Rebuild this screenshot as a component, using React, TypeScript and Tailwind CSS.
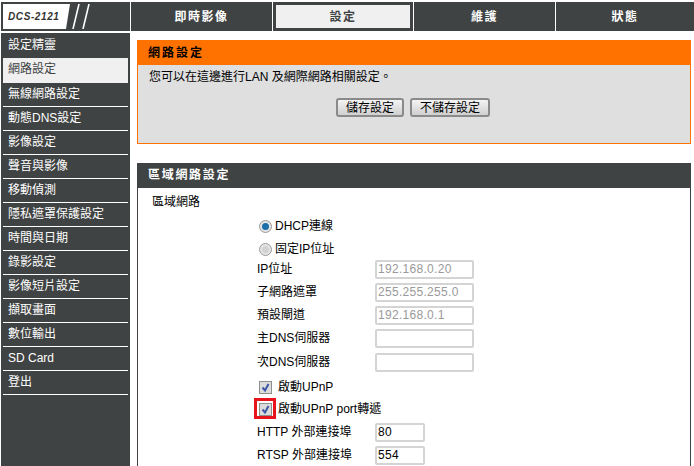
const font = { fontFamily: '"Liberation Sans", "Noto Sans CJK TC", sans-serif' };

const menu = ["設定精靈", "網路設定", "無線網路設定", "動態DNS設定", "影像設定", "聲音與影像", "移動偵測", "隱私遮罩保護設定", "時間與日期", "錄影設定", "影像短片設定", "擷取畫面", "數位輸出", "SD Card", "登出"];

function Check() {
  return (
    <div className="w-[13px] h-[13px] border border-[#8e8f8f] bg-[#dcdcdc] flex items-center justify-center">
      <svg width="11" height="11" viewBox="0 0 11 11">
        <path d="M2.5 5.5 L5 8.5 L8.5 2" fill="none" stroke="#3f58a6" strokeWidth="2" />
      </svg>
    </div>
  );
}

function Radio({ on }: { on?: boolean }) {
  return (
    <div className="w-[13px] h-[13px] rounded-full border border-[#9a9a9a] bg-[#e4e4e4] flex items-center justify-center">
      {on ? <div className="w-[7px] h-[7px] rounded-full bg-[#1c6ea8]" /> : <div className="w-[7px] h-[7px] rounded-full bg-[#d2d2d2]" />}
    </div>
  );
}

function Field({ label, value, wide, mb }: { label: string; value?: string; wide?: boolean; mb: string }) {
  return (
    <div className={`flex items-start pl-[119px] h-[19px] ${mb}`}>
      <div className="w-[118px] text-[12px] leading-[16px] pt-[1px] text-black">{label}</div>
      <div className={`${wide ? "w-[99px] text-[#9a9a9a]" : "w-[50px] text-black"} h-[19px] border-2 border-[#d4d4d4] rounded-[2px] bg-white text-[12px] leading-[15px] pl-[1px] tracking-[0.3px]`}>
        {value}
      </div>
    </div>
  );
}

export default function App() {
  return (
    <div className="w-[694px] h-[466px] overflow-hidden bg-white flex flex-col pt-[2px]" style={font}>
      {/* top bar */}
      <div className="flex h-[29px] shrink-0">
        <div className="w-[129px] ml-[1px] bg-[#404343] flex items-center pl-[2px]">
          <div className="w-[67px] h-[25px] bg-white flex items-center pl-[5px] text-[10px] font-bold italic text-[#333] tracking-[0.6px] [clip-path:polygon(0_0,100%_0,94%_100%,0_100%)]">
            DCS-2121
          </div>
          <svg width="24" height="25" viewBox="0 0 24 25" className="ml-[1px]">
            <path d="M2 25 L8 0 M12 25 L18 0" stroke="#fff" strokeWidth="1.6" />
          </svg>
        </div>
        <div className="w-[141px] ml-[1px] bg-[#404343] flex items-center justify-center text-[12px] font-bold tracking-[1.5px] text-white">即時影像</div>
        <div className="w-[1px] bg-white" />
        <div className="w-[140px] bg-[#404343] p-[3px]">
          <div className="h-full bg-[#f0f0f0] flex items-center justify-center text-[12px] font-bold tracking-[1.5px] text-[#404343]">設定</div>
        </div>
        <div className="w-[1px] bg-white" />
        <div className="w-[141px] bg-[#404343] flex items-center justify-center text-[12px] font-bold tracking-[1.5px] text-white">維護</div>
        <div className="w-[1px] bg-white" />
        <div className="flex-1 bg-[#404343] flex items-center justify-center text-[12px] font-bold tracking-[1.5px] text-white">狀態</div>
      </div>

      <div className="flex flex-1 mt-[2px] min-h-0">
        {/* sidebar */}
        <div className="w-[129px] ml-[1px] bg-[#404343] pt-[1px] px-[2px] shrink-0">
          {menu.map((m, i) => (
            <div
              key={m}
              className={
                i === 1
                  ? "h-[25px] bg-[#f0f0f0] text-[#404343] text-[12px] leading-[22px] pl-[5px]"
                  : `h-[24px] text-white text-[12px] leading-[23px] pl-[5px] ${i === 0 ? "" : "border-b border-white"}`
              }
            >
              {m}
            </div>
          ))}
        </div>

        <div className="flex-1 pl-[7px] pr-[3px] pt-[7px] min-w-0">
          {/* save panel */}
          <div className="border border-[#ff7200] bg-[#dfdfdf] h-[104px]">
            <div className="h-[24px] bg-[#ff7200] text-black text-[12px] font-bold leading-[24px] pl-[10px] tracking-[2px]">網路設定</div>
            <div className="text-[12px] leading-[16px] pl-[11px] pt-[4px] text-black">您可以在這邊進行LAN 及網際網路相關設定。</div>
            <div className="flex justify-center gap-[6px] mt-[13px] pr-[2px]">
              <button className="w-[68px] h-[19px] border-2 border-[#8a8a8a] rounded-[3px] bg-gradient-to-b from-[#f4f4f4] to-[#d0d0d0] text-[12px] leading-[14px] text-black">儲存設定</button>
              <button className="w-[80px] h-[19px] border-2 border-[#8a8a8a] rounded-[3px] bg-gradient-to-b from-[#f4f4f4] to-[#d0d0d0] text-[12px] leading-[14px] text-black">不儲存設定</button>
            </div>
          </div>

          {/* lan panel */}
          <div className="mt-[19px] border-x border-[#404343] h-[320px]">
            <div className="h-[25px] bg-[#404343] text-white text-[12px] font-bold leading-[25px] pl-[10px] tracking-[1.7px]">區域網路設定</div>
            <div className="text-[12px] leading-[16px] pl-[14px] pt-[6px] text-black h-[30px]">區域網路</div>
            <div className="flex items-center h-[16px] mb-[7px] pl-[121px] gap-[3px] text-[12px]"><Radio on />DHCP連線</div>
            <div className="flex items-center h-[16px] mb-[3px] pl-[121px] gap-[3px] text-[12px]"><Radio />固定IP位址</div>
            <Field label="IP位址" value="192.168.0.20" wide mb="mb-[4px]" />
            <Field label="子網路遮罩" value="255.255.255.0" wide mb="mb-[4px]" />
            <Field label="預設閘道" value="192.168.0.1" wide mb="mb-[4px]" />
            <Field label="主DNS伺服器" wide mb="mb-[5px]" />
            <Field label="次DNS伺服器" wide mb="mb-[8px]" />
            <div className="flex items-center h-[14px] mb-[8px] pl-[121px] gap-[6px] text-[12px]"><Check />啟動UPnP</div>
            <div className="flex items-center h-[14px] mb-[7px] pl-[121px] gap-[6px] text-[12px]">
              <div className="relative">
                <Check />
                <div className="absolute left-[-5px] top-[-5px] w-[22px] h-[21px] border-[3px] border-[#e8141c]" />
              </div>
              啟動UPnP port轉遞
            </div>
            <Field label="HTTP 外部連接埠" value="80" mb="mb-[4px]" />
            <Field label="RTSP 外部連接埠" value="554" mb="mb-[0px]" />
          </div>
        </div>
      </div>
    </div>
  );
}
